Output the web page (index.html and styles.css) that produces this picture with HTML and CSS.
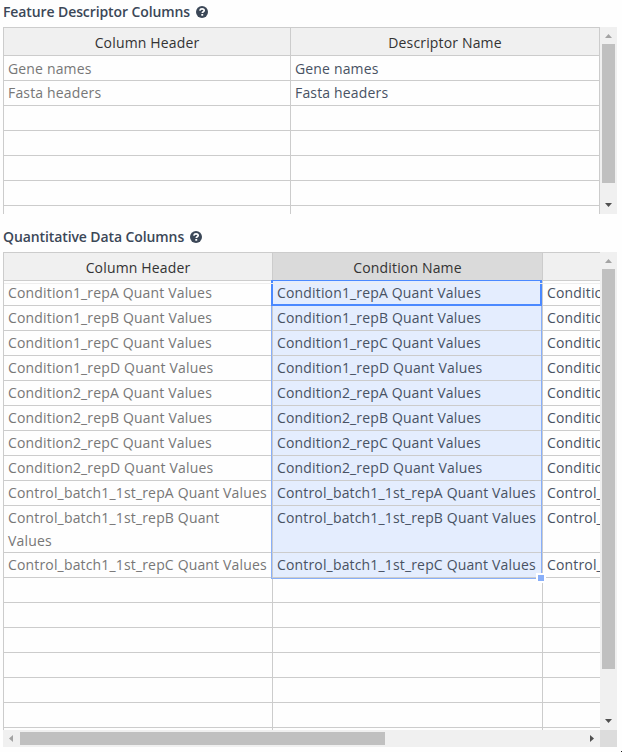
FILE: index.html
```html
<!DOCTYPE html>
<html lang="en">
<head>
<meta charset="utf-8">
<title>Columns</title>
<link rel="stylesheet" href="styles.css">
</head>
<body>
<svg class="defs" aria-hidden="true"><symbol id="help" viewBox="0 0 12 12"><circle cx="6" cy="6" r="6" fill="#3b4757"/><path d="M3.8 4.6C4.1 3.3 4.9 2.8 6 2.8c1.3 0 2.2.7 2.2 1.7 0 1.4-1.9 1.2-1.9 2.6" fill="none" stroke="#fff" stroke-width="1.7"/><rect x="5.3" y="8" width="1.9" height="1.7" fill="#fff"/></symbol></svg>
<section>
  <h2 class="title"><span>Feature Descriptor Columns</span><svg class="help"><use href="#help"/></svg></h2>
  <div class="pane features">
    <div class="view">
      <div class="grid">
        <div class="head">Column Header</div><div class="head">Descriptor Name</div>
        <div class="cell first muted">Gene names</div><div class="cell first">Gene names</div>
        <div class="cell muted">Fasta headers</div><div class="cell">Fasta headers</div>
        <div class="cell"></div><div class="cell"></div>
        <div class="cell"></div><div class="cell"></div>
        <div class="cell"></div><div class="cell"></div>
        <div class="cell"></div><div class="cell"></div>
        <div class="cell"></div><div class="cell"></div>
      </div>
    </div>
    <div class="vbar"><i class="arrow up"></i><i class="thumb"></i><i class="arrow down"></i></div>
  </div>
</section>
<section>
  <h2 class="title second"><span>Quantitative Data Columns</span><svg class="help"><use href="#help"/></svg></h2>
  <div class="pane quant">
    <div class="view">
      <div class="grid">
        <div class="head">Column Header</div><div class="head active">Condition Name</div><div class="head"></div>
        <div class="cell muted">Condition1_repA Quant Values</div><div class="cell sel">Condition1_repA Quant Values</div><div class="cell">Condition1</div>
        <div class="cell muted">Condition1_repB Quant Values</div><div class="cell sel">Condition1_repB Quant Values</div><div class="cell">Condition1</div>
        <div class="cell muted">Condition1_repC Quant Values</div><div class="cell sel">Condition1_repC Quant Values</div><div class="cell">Condition1</div>
        <div class="cell muted">Condition1_repD Quant Values</div><div class="cell sel">Condition1_repD Quant Values</div><div class="cell">Condition1</div>
        <div class="cell muted">Condition2_repA Quant Values</div><div class="cell sel">Condition2_repA Quant Values</div><div class="cell">Condition2</div>
        <div class="cell muted">Condition2_repB Quant Values</div><div class="cell sel">Condition2_repB Quant Values</div><div class="cell">Condition2</div>
        <div class="cell muted">Condition2_repC Quant Values</div><div class="cell sel">Condition2_repC Quant Values</div><div class="cell">Condition2</div>
        <div class="cell muted">Condition2_repD Quant Values</div><div class="cell sel">Condition2_repD Quant Values</div><div class="cell">Condition2</div>
        <div class="cell muted">Control_batch1_1st_repA Quant Values</div><div class="cell sel">Control_batch1_1st_repA Quant Values</div><div class="cell">Control_batch1</div>
        <div class="cell muted">Control_batch1_1st_repB Quant<br>Values</div><div class="cell sel">Control_batch1_1st_repB Quant Values</div><div class="cell">Control_batch1</div>
        <div class="cell muted">Control_batch1_1st_repC Quant Values</div><div class="cell sel">Control_batch1_1st_repC Quant Values</div><div class="cell">Control_batch1</div>
        <div class="cell"></div><div class="cell"></div><div class="cell"></div>
        <div class="cell"></div><div class="cell"></div><div class="cell"></div>
        <div class="cell"></div><div class="cell"></div><div class="cell"></div>
        <div class="cell"></div><div class="cell"></div><div class="cell"></div>
        <div class="cell"></div><div class="cell"></div><div class="cell"></div>
        <div class="cell"></div><div class="cell"></div><div class="cell"></div>
        <div class="cell"></div><div class="cell"></div><div class="cell"></div>
      </div>
      <div class="range"></div>
      <div class="current"></div>
      <div class="seam"></div>
      <div class="handle"></div>
    </div>
    <div class="vbar"><i class="arrow up"></i><i class="thumb"></i><i class="arrow down"></i></div>
    <div class="hbar"><i class="arrow left"></i><i class="thumb"></i><i class="arrow right"></i></div>
    <div class="corner"></div>
  </div>
</section>
<i class="dot"></i>
</body>
</html>
```
FILE: styles.css
```css
* { box-sizing: border-box; }
body {
  margin: 0;
  padding-left: 3px;
  height: 752px;
  overflow: hidden;
  background: #fefefe;
  font: 14px/23px "Open Sans", sans-serif;
  letter-spacing: .16px;
  color: #485263;
}
.defs { position: absolute; width: 0; height: 0; }
.title {
  display: flex;
  align-items: center;
  gap: 6px;
  margin: 0;
  height: 27px;
  padding-bottom: 3px;
  font-size: 14px;
  font-weight: 600;
  letter-spacing: -.1px;
  color: #3b4757;
}
.title span { padding-bottom: 2px; }
.title.second { height: 38px; padding-top: 11px; }
.help { width: 12px; height: 12px; }
.pane { display: grid; grid-template-columns: 597px 17px; }
.features { height: 187px; grid-template-rows: 187px; width: 614px; }
.quant { grid-template-rows: 478px 17px; width: 614px; }
.view { position: relative; overflow: hidden; }
.grid {
  display: grid;
  border-top: 1px solid #ccc;
  border-left: 1px solid #ccc;
}
.features .grid { grid-template-columns: 287px 309px; grid-template-rows: 28px; grid-auto-rows: 25px; }
.quant .grid { grid-template-columns: 269px 270px 270px; grid-template-rows: 28px; grid-auto-rows: minmax(25px, auto); }
.head, .cell { border-right: 1px solid #ccc; border-bottom: 1px solid #ccc; }
.head { padding-top: 3px; background: #f0f0f0; color: #333; text-align: center; }
.head.active { background: #dadada; }
.cell { padding: 0 4px; white-space: nowrap; overflow: hidden; }
.cell.first { padding-top: 1px; }
.muted { color: #777; }
.sel { background: #e4edfe; }
.range {
  position: absolute;
  left: 268px; top: 28px;
  width: 271px; height: 299px;
  border: 1px solid #89aff9;
}
.current {
  position: absolute;
  left: 268px; top: 28px;
  width: 271px; height: 26px;
  border: 2px solid #4b89ff;
  border-top-width: 1px;
}
.seam { position: absolute; left: 1px; top: 31px; width: 596px; height: 1px; background: #eee; }
.handle {
  position: absolute;
  left: 533px; top: 321px;
  width: 10px; height: 10px;
  border: 2px solid #fff;
  background: #89aff9;
}
.vbar, .hbar { display: flex; background: #f0f0f0; }
.vbar { flex-direction: column; align-items: center; }
.hbar { align-items: center; }
.thumb { background: #c0c0c0; flex: none; }
.vbar .thumb { width: 13px; height: 139px; margin-top: 5px; }
.quant .vbar .thumb { height: 400px; }
.hbar .thumb { width: 365px; height: 13px; margin-left: 5px; }
.arrow { flex: none; background: #505050; }
.up { width: 7px; height: 4px; margin-top: 7px; margin-bottom: 1px; background: #a3a3a3; clip-path: polygon(50% 0, 100% 100%, 0 100%); }
.down { width: 7px; height: 4px; margin-top: auto; margin-bottom: 7px; clip-path: polygon(0 0, 100% 0, 50% 100%); }
.left { width: 4px; height: 7px; margin-left: 6px; margin-right: 2px; background: #a3a3a3; clip-path: polygon(0 50%, 100% 0, 100% 100%); }
.right { width: 4px; height: 7px; margin-left: auto; margin-right: 6px; clip-path: polygon(0 0, 100% 50%, 0 100%); }
.corner { background: #dcdcdc; }
.dot { position: absolute; right: 0; bottom: 0; width: 1px; height: 1px; background: #222; }
```
